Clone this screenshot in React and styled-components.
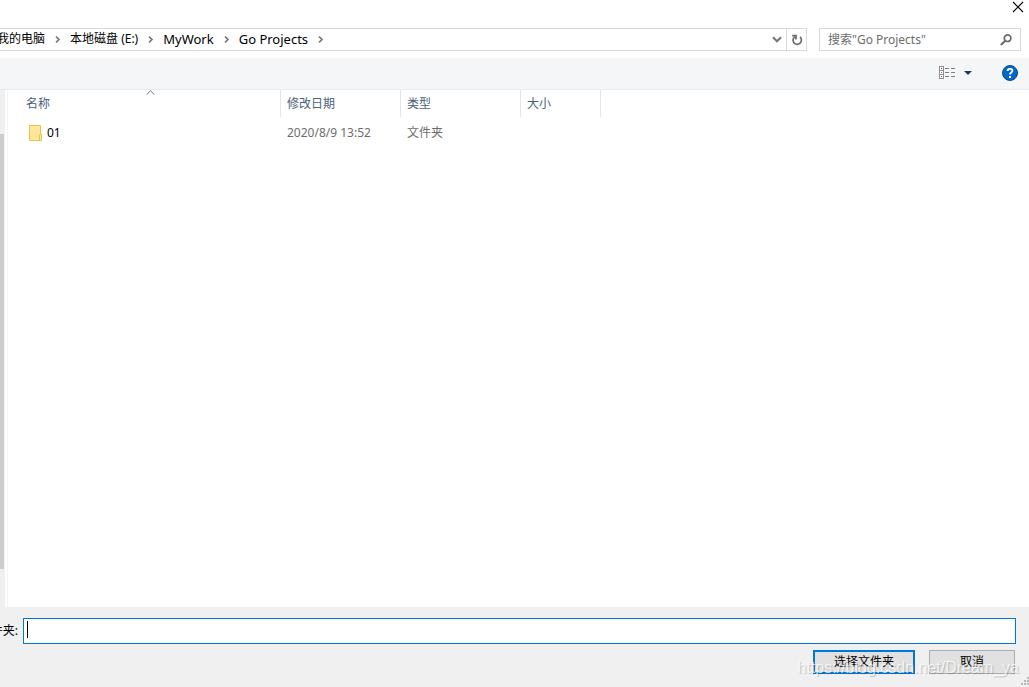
import React from 'react'
import { styled, createGlobalStyle } from 'styled-components'

const GlobalStyle = createGlobalStyle`
  *, *::before, *::after {
    box-sizing: border-box;
  }

  body {
    margin: 0;
    background: #fff;
    font-family: 'Noto Sans', 'Noto Sans CJK SC', sans-serif;
    font-size: 12px;
    line-height: 16px;
    color: #000;
  }

  button, input {
    font: inherit;
    color: inherit;
  }
`

const Dialog = styled.div`
  position: relative;
  display: flex;
  flex-direction: column;
  min-height: 100vh;
  overflow: hidden;
`

const TitleBar = styled.header`
  display: flex;
  justify-content: flex-end;
  height: 28px;
  padding-right: 5px;
`

const IconButton = styled.button`
  display: flex;
  align-items: center;
  justify-content: center;
  width: ${(props) => props.$width || 20}px;
  height: ${(props) => props.$height || 21}px;
  padding: 0;
  border: 0;
  background: transparent;
`

const NavRow = styled.div`
  display: flex;
  gap: 12px;
  height: 30px;
  padding-right: 8px;
`

const AddressBar = styled.nav`
  display: flex;
  flex: 1;
  height: 23px;
  margin-left: -4px;
  border: 1px solid #d9d9d9;
`

const Crumbs = styled.ol`
  display: flex;
  flex: 1;
  margin: 0;
  padding: 0 0 2px;
  list-style: none;
`

const Crumb = styled.li`
  display: flex;
  align-items: center;
  font-size: ${(props) => (props.$latin ? 13 : 12)}px;

  a {
    color: #000;
    text-decoration: none;
    white-space: nowrap;
  }

  svg {
    margin: 1px 9px 0 10px;
  }
`

const RefreshCell = styled.div`
  border-left: 1px solid #d9d9d9;
`

const SearchBox = styled.div`
  display: flex;
  width: 202px;
  height: 23px;
  padding: 0 1px 0 8px;
  border: 1px solid #d9d9d9;
`

const SearchInput = styled.input`
  flex: 1;
  min-width: 0;
  padding: 0;
  border: 0;
  outline: 0;
  background: transparent;

  &::placeholder {
    color: #6d6d6d;
    opacity: 1;
  }
`

const Toolbar = styled.div`
  display: flex;
  align-items: center;
  justify-content: flex-end;
  height: 32px;
  padding: 0 9px 2px 0;
  background: #f5f6f7;
  border-bottom: 1px solid #e8e9ea;
`

const ViewButtons = styled.div`
  display: flex;
  margin-right: 21px;
`

const Body = styled.main`
  display: flex;
  flex: 1;
`

const ScrollTrack = styled.div`
  display: flex;
  width: 5px;
  padding: 44px 1px 38px 0;
  background: #f0f0f0;
`

const ScrollThumb = styled.div`
  flex: 1;
  background: #cdcdcd;
`

const FilePane = styled.section`
  flex: 1;
  margin-left: 2px;
  border-left: 1px solid #f5f5f5;
`

const FileTable = styled.table`
  width: 593px;
  table-layout: fixed;
  border-collapse: separate;
  border-spacing: 0;
`

const HeadCell = styled.th`
  position: relative;
  width: ${(props) => props.$width}px;
  height: 27px;
  padding: 0 0 0 ${(props) => (props.$first ? 18 : 6)}px;
  border-right: 1px solid #e5e5e5;
  color: #4c607a;
  font-weight: 400;
  text-align: left;
`

const SortMark = styled.svg`
  position: absolute;
  top: 0;
  left: calc(50% + 2px);
`

const Cell = styled.td`
  height: 32px;
  padding: 0 0 0 6px;
  color: #6d6d6d;
`

const FileName = styled.div`
  display: flex;
  align-items: center;
  gap: 4px;
  padding-left: 15px;
  color: #000;
`

const Footer = styled.footer`
  height: 80px;
  padding: 11px 13px 0 0;
  background: #f0f0f0;
`

const FolderField = styled.div`
  display: flex;
  align-items: center;
  gap: 5px;
`

const FolderLabel = styled.label`
  display: flex;
  justify-content: flex-end;
  width: 18px;
  overflow: hidden;
  white-space: nowrap;
`

const FolderInputWrap = styled.div`
  position: relative;
  display: flex;
  flex: 1;
`

const FolderInput = styled.input`
  flex: 1;
  min-width: 0;
  height: 26px;
  padding: 0 4px;
  border: 1px solid #0078d7;
  outline: 0;
  background: #fff;
`

const Caret = styled.span`
  position: absolute;
  top: 3px;
  left: 4px;
  width: 1px;
  height: 17px;
  background: #000;
`

const Actions = styled.div`
  display: flex;
  justify-content: flex-end;
  gap: 14px;
  margin-top: 6px;
  padding-right: 1px;
`

const ActionButton = styled.button`
  width: ${(props) => (props.$primary ? 102 : 86)}px;
  height: 24px;
  padding: 0;
  border: ${(props) => (props.$primary ? '2px solid #0078d7' : '1px solid #adadad')};
  background: #e1e1e1;
`

const Watermark = styled.span`
  position: absolute;
  right: 10px;
  bottom: 9px;
  color: rgba(255, 255, 255, 0.75);
  font-family: 'Liberation Sans', Arial, sans-serif;
  font-size: 16px;
  line-height: 20px;
  text-shadow: 1px 1px 1px rgba(0, 0, 0, 0.2);
  pointer-events: none;
`

const Grip = styled.svg`
  position: absolute;
  right: 0;
  bottom: 2px;
`

const crumbs = [
  { name: '我的电脑' },
  { name: '本地磁盘 (E:)' },
  { name: 'MyWork', latin: true },
  { name: 'Go Projects', latin: true },
]

const files = [{ name: '01', date: '2020/8/9 13:52', type: '文件夹', size: '' }]

const CrumbArrow = () => (
  <svg width="6" height="7" viewBox="0 0 6 7" fill="none" stroke="#767676" strokeWidth="1.6">
    <path d="M1 0.7 L4 3.5 L1 6.3" />
  </svg>
)

const FolderIcon = () => (
  <svg width="14" height="16" viewBox="0 0 14 16">
    <path d="M0.5 0.5 H11.5 V15.5 H0.5 Z" fill="#ffe797" stroke="#e8c34a" />
    <path d="M10.5 15.5 V9.5 H12.5 V15.5 Z" fill="#ffe797" stroke="#e8c34a" />
  </svg>
)

const App = () => {
  return (
    <>
      <GlobalStyle />
      <Dialog>
        <TitleBar>
          <IconButton aria-label="关闭" $width={12} $height={14}>
            <svg width="12" height="12" viewBox="0 0 12 12" stroke="#000" strokeWidth="1.1">
              <path d="M1 1 L11 11 M11 1 L1 11" />
            </svg>
          </IconButton>
        </TitleBar>

        <NavRow>
          <AddressBar>
            <Crumbs>
              {crumbs.map((crumb) => (
                <Crumb key={crumb.name} $latin={crumb.latin}>
                  <a href="#">{crumb.name}</a>
                  <CrumbArrow />
                </Crumb>
              ))}
            </Crumbs>
            <IconButton aria-label="以前的位置" $width={18}>
              <svg width="10" height="7" viewBox="0 0 10 7" fill="none" stroke="#767676" strokeWidth="2.1">
                <path d="M1 1.2 L5 5.2 L9 1.2" />
              </svg>
            </IconButton>
            <RefreshCell>
              <IconButton aria-label="刷新" $width={19}>
                <svg width="12" height="12" viewBox="0 0 12 12" fill="none" stroke="#6b6b6b" strokeWidth="1.7">
                  <path d="M9 3 A4.2 4.2 0 1 1 4 2.6" />
                  <path d="M1.2 1.6 H5 V5.6" />
                </svg>
              </IconButton>
            </RefreshCell>
          </AddressBar>
          <SearchBox>
            <SearchInput aria-label="搜索" placeholder={'搜索"Go Projects"'} />
            <IconButton aria-label="开始搜索" $width={26}>
              <svg width="12" height="12" viewBox="0 0 12 12" fill="none" stroke="#6b6b6b">
                <circle cx="7.6" cy="4.2" r="3.3" strokeWidth="1.7" />
                <path d="M5.2 6.8 L0.8 11" strokeWidth="2" />
              </svg>
            </IconButton>
          </SearchBox>
        </NavRow>

        <Toolbar>
          <ViewButtons>
            <IconButton aria-label="更改视图" $width={20}>
              <svg width="17" height="13" viewBox="0 0 17 13" shapeRendering="crispEdges">
                <path d="M0.5 0.5 H4.5 V12.5 H0.5 Z M0.5 4.5 H4.5 M0.5 8.5 H4.5" fill="#fff" stroke="#8f8f8f" />
                <path d="M6 2.5 H10 M12 2.5 H16 M6 6.5 H10 M12 6.5 H16 M6 10.5 H10 M12 10.5 H16" stroke="#7d7d7d" />
                <rect x="2" y="2" width="1" height="1" fill="#555" />
                <rect x="2" y="6" width="1" height="1" fill="#4a7fe0" />
                <rect x="2" y="10" width="1" height="1" fill="#d02020" />
              </svg>
            </IconButton>
            <IconButton aria-label="更多选项" $width={22}>
              <svg width="8" height="4" viewBox="0 0 8 4">
                <path d="M0 0 H8 L4 4 Z" fill="#1a3a66" />
              </svg>
            </IconButton>
          </ViewButtons>
          <IconButton aria-label="帮助" $width={20}>
            <svg width="16" height="16" viewBox="0 0 16 16">
              <circle cx="8" cy="8" r="7.5" fill="#0067cb" stroke="#124a80" />
              <path d="M5.6 6 C5.6 3.2 10.4 3.2 10.4 5.8 C10.4 7.6 8 7.6 8 9.6" fill="none" stroke="#fff" strokeWidth="1.9" />
              <rect x="7" y="11" width="2" height="2" fill="#fff" />
            </svg>
          </IconButton>
        </Toolbar>

        <Body>
          <ScrollTrack>
            <ScrollThumb />
          </ScrollTrack>
          <FilePane>
            <FileTable>
              <thead>
                <tr>
                  <HeadCell $width={273} $first>
                    名称
                    <SortMark width="9" height="5" viewBox="0 0 9 5" fill="none" stroke="#6b6b6b">
                      <path d="M0.7 4.5 L4.5 0.8 L8.3 4.5" />
                    </SortMark>
                  </HeadCell>
                  <HeadCell $width={120}>修改日期</HeadCell>
                  <HeadCell $width={120}>类型</HeadCell>
                  <HeadCell $width={80}>大小</HeadCell>
                </tr>
              </thead>
              <tbody>
                {files.map((file) => (
                  <tr key={file.name}>
                    <Cell>
                      <FileName>
                        <FolderIcon />
                        {file.name}
                      </FileName>
                    </Cell>
                    <Cell>{file.date}</Cell>
                    <Cell>{file.type}</Cell>
                    <Cell>{file.size}</Cell>
                  </tr>
                ))}
              </tbody>
            </FileTable>
          </FilePane>
        </Body>

        <Footer>
          <FolderField>
            <FolderLabel htmlFor="folder">文件夹:</FolderLabel>
            <FolderInputWrap>
              <FolderInput id="folder" type="text" />
              <Caret />
            </FolderInputWrap>
          </FolderField>
          <Actions>
            <ActionButton type="button" $primary>选择文件夹</ActionButton>
            <ActionButton type="button">取消</ActionButton>
          </Actions>
        </Footer>

        <Watermark>https://blog.csdn.net/Dream_ya</Watermark>
        <Grip width="8" height="8" viewBox="0 0 8 8" fill="#b8b8b8">
          <path d="M6 0h2v2H6z M3 3h2v2H3z M6 3h2v2H6z M0 6h2v2H0z M3 6h2v2H3z M6 6h2v2H6z" />
        </Grip>
      </Dialog>
    </>
  )
}

export default App
